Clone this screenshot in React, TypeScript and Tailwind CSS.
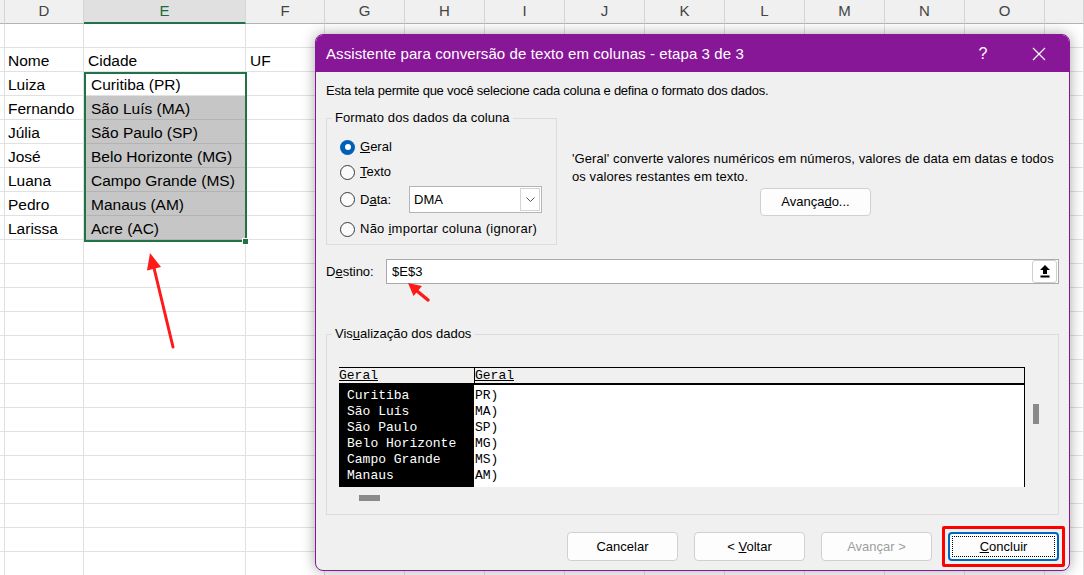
import React from "react";

const COLS = ["", "D", "E", "F", "G", "H", "I", "J", "K", "L", "M", "N", "O", ""];

const people: [string, string][] = [
  ["Luiza", "Curitiba (PR)"],
  ["Fernando", "São Luís (MA)"],
  ["Júlia", "São Paulo (SP)"],
  ["José", "Belo Horizonte (MG)"],
  ["Luana", "Campo Grande (MS)"],
  ["Pedro", "Manaus (AM)"],
  ["Larissa", "Acre (AC)"],
];

const preview: [string, string][] = [
  ["Curitiba", "PR)"],
  ["São Luís", "MA)"],
  ["São Paulo", "SP)"],
  ["Belo Horizonte", "MG)"],
  ["Campo Grande", "MS)"],
  ["Manaus", "AM)"],
];

function cellText(r: number, c: number): string {
  if (r === 1) {
    if (c === 1) return "Nome";
    if (c === 2) return "Cidade";
    if (c === 3) return "UF";
    return "";
  }
  if (r >= 2 && r <= 8) {
    const p = people[r - 2];
    if (c === 1) return p[0];
    if (c === 2) return p[1];
  }
  return "";
}

function Sheet() {
  const rows = Array.from({ length: 23 }, (_, i) => i);
  return (
    <div className="grid grid-cols-[5px_79px_162px_79px_repeat(9,80px)_39px] font-['Liberation_Sans',Arial,sans-serif]">
      {COLS.map((c, i) => (
        <div
          key={"h" + i}
          className={`flex h-6 items-center justify-center overflow-hidden border-r border-r-[#d6d6d6] text-[15px] ${
            i === 2
              ? "border-b-2 border-b-[#217346] bg-[#e0e0e0] text-[#1b6b3f]"
              : "border-b border-b-[#b4b4b4] bg-[#f0f0f0] text-[#444]"
          }`}
        >
          {c}
        </div>
      ))}
      {rows.map((r) =>
        COLS.map((_, c) => {
          const sel = c === 2 && r >= 3 && r <= 8;
          const pad = c === 1 ? "pl-[3px]" : c === 2 ? (r >= 2 ? "pl-[7px]" : "pl-[4px]") : "pl-[4px]";
          return (
            <div
              key={r + "-" + c}
              className={`flex h-6 items-center overflow-visible whitespace-nowrap border-b border-r pt-[2px] text-[15.5px] text-black ${pad} ${
                sel ? "border-[#b3b3b3] bg-[#c6c6c6]" : "border-[#e1e1e1] bg-white"
              }`}
            >
              {cellText(r, c)}
            </div>
          );
        }),
      )}
    </div>
  );
}

function Radio({ checked }: { checked?: boolean }) {
  return checked ? (
    <span className="flex h-[15px] w-[15px] shrink-0 items-center justify-center rounded-full bg-[#005fb8]">
      <span className="h-[6px] w-[6px] rounded-full bg-white" />
    </span>
  ) : (
    <span className="h-[15px] w-[15px] shrink-0 rounded-full border border-[#3a3a3a] bg-[#fbfbfb]" />
  );
}

function Btn({ children, disabled }: { children: React.ReactNode; disabled?: boolean }) {
  return (
    <button
      className={`h-[29px] w-[111px] rounded-[4px] border border-[#d0d0d0] bg-[#fdfdfd] text-[13px] ${
        disabled ? "text-[#9d9d9d]" : "text-black"
      }`}
    >
      {children}
    </button>
  );
}

function Dialog() {
  return (
    <div className="absolute left-[315px] top-[34px] w-[755px] overflow-hidden rounded-[8px] border border-[#881798] bg-[#f0f0f0] font-['Liberation_Sans',Arial,sans-serif] text-[13px] text-black shadow-[0_0_14px_rgba(0,0,0,0.35)]">
      <div className="flex h-[37px] items-center bg-[#881798] pl-[10px] pt-[1px] text-white">
        <span className="text-[15px] tracking-[0.1px]">Assistente para conversão de texto em colunas - etapa 3 de 3</span>
        <span className="ml-auto w-[30px] text-center text-[16px] font-light">?</span>
        <span className="ml-[18px] mr-[7px] flex w-[46px] items-center justify-center">
          <svg width="14" height="14" viewBox="0 0 14 14">
            <path d="M1 1L13 13M13 1L1 13" stroke="white" strokeWidth="1.2" />
          </svg>
        </span>
      </div>

      <div className="px-[10px] pb-[9px] pt-[11px]">
        <div className="leading-4 tracking-[-0.25px]">
          Esta tela permite que você selecione cada coluna e defina o formato dos dados.
        </div>

        <div className="mt-[11px] flex">
          <fieldset className="h-[135px] w-[231px] shrink-0 border border-[#dcdcdc]">
            <legend className="ml-[5px] px-[3px] leading-4 tracking-[0.1px]">Formato dos dados da coluna</legend>
            <div className="pl-[13px]">
              <div className="mt-[11px] flex h-[20px] items-center gap-[5px]">
                <Radio checked />
                <span>
                  <u>G</u>eral
                </span>
              </div>
              <div className="mt-[5px] flex h-[20px] items-center gap-[5px]">
                <Radio />
                <span>
                  <u>T</u>exto
                </span>
              </div>
              <div className="mt-[4px] flex h-[27px] items-center gap-[5px]">
                <Radio />
                <span className="w-[44px]">
                  D<u>a</u>ta:
                </span>
                <div className="flex h-[27px] w-[133px] items-stretch border border-[#b4b4b4] bg-white">
                  <span className="flex flex-1 items-center pl-[4px]">DMA</span>
                  <span className="my-[1px] mr-[1px] flex w-[20px] items-center justify-center border border-[#d4d4d4]">
                    <svg width="9" height="5" viewBox="0 0 9 5">
                      <path d="M0.5 0.5L4.5 4.5L8.5 0.5" fill="none" stroke="#555" strokeWidth="1" />
                    </svg>
                  </span>
                </div>
              </div>
              <div className="mt-[6px] flex h-[20px] items-center gap-[5px]">
                <Radio />
                <span className="tracking-[0.25px]">
                  Não <u>i</u>mportar coluna (ignorar)
                </span>
              </div>
            </div>
          </fieldset>

          <div className="ml-[15px] flex flex-1 flex-col items-center pt-[40px]">
            <div className="w-full leading-[18px] tracking-[0.09px]">
              'Geral' converte valores numéricos em números, valores de data em datas e todos
              <br />
              os valores restantes em texto.
            </div>
            <button className="mt-[2px] h-[28px] w-[111px] rounded-[4px] border border-[#d0d0d0] bg-[#fdfdfd] text-[13px]">
              Avança<u>d</u>o...
            </button>
          </div>
        </div>

        <div className="mt-[14px] flex items-center">
          <span className="w-[60px]">
            D<u>e</u>stino:
          </span>
          <div className="flex h-[25px] flex-1 items-center border border-[#a9a9a9] bg-white">
            <span className="pl-[5px]">$E$3</span>
            <span className="ml-auto mr-[1px] flex h-[23px] w-[25px] items-center justify-center rounded-[3px] border border-[#cfcfcf] bg-white">
              <svg width="10" height="13" viewBox="0 0 10 13">
                <path d="M5 0L10 5H7V9H3V5H0Z" fill="black" />
                <rect x="0.5" y="10.5" width="9" height="2" fill="black" />
              </svg>
            </span>
          </div>
        </div>

        <fieldset className="mt-[42px] h-[189px] border border-[#dcdcdc]">
          <legend className="ml-[5px] px-[3px] leading-4">
            Vis<u>u</u>alização dos dados
          </legend>
          <div className="mt-[25px] flex items-start pl-[12px]">
            <div className="flex h-[120px] w-[686px] flex-col overflow-hidden border-r border-t border-black font-['Liberation_Mono','Courier_New',monospace] text-[13px] leading-4">
              <div className="flex h-[15px] bg-[#f0f0f0] leading-[16px]">
                <span className="w-[136px] border-r border-black underline">Geral</span>
                <span className="underline">Geral</span>
              </div>
              <div className="h-[2px] bg-black" />
              <div className="flex flex-1">
                <div className="w-[135px] bg-black pl-[8px] pt-[3px] text-white">
                  {preview.map(([a]) => (
                    <div key={a} className="h-4 whitespace-pre">
                      {a}
                    </div>
                  ))}
                </div>
                <div className="flex-1 bg-white pl-[1px] pt-[3px]">
                  {preview.map(([a, b]) => (
                    <div key={a} className="h-4">
                      {b}
                    </div>
                  ))}
                </div>
              </div>
            </div>
            <div className="ml-[8px] mt-[37px] h-[20px] w-[6px] bg-[#8a8a8a]" />
          </div>
          <div className="ml-[32px] mt-[8px] h-[6px] w-[21px] bg-[#8a8a8a]" />
        </fieldset>

        <div className="mt-[17px] flex justify-end gap-[16px]">
          <Btn>Cancelar</Btn>
          <Btn>
            &lt; <u>V</u>oltar
          </Btn>
          <Btn disabled>Avançar &gt;</Btn>
          <div className="relative">
            <button className="relative h-[29px] w-[111px] rounded-[4px] border-2 border-[#0067c0] bg-[#fdfdfd] text-[13px]">
              <span className="absolute inset-[2px] border border-dotted border-black" />
              <u>C</u>oncluir
            </button>
            <div className="pointer-events-none absolute -inset-[6px] rounded-[2px] border-[3px] border-[#ff0000]" />
          </div>
        </div>
      </div>
    </div>
  );
}

export default function App() {
  return (
    <div className="relative h-[575px] w-[1084px] overflow-hidden bg-white">
      <Sheet />
      <div className="absolute left-[84px] top-[72px] h-[170px] w-[163px] border-2 border-[#217346]" />
      <div className="absolute left-[242px] top-[238px] h-[7px] w-[7px] border border-white bg-[#217346]" />
      <Dialog />
      <svg className="pointer-events-none absolute left-0 top-0" width="1084" height="575">
        <line x1="173" y1="347" x2="154" y2="268" stroke="#ff1a1a" strokeWidth="3" strokeLinecap="round" />
        <polygon points="150,253 161,267 147,270.5" fill="#ff1a1a" />
        <line x1="428" y1="300" x2="417" y2="291" stroke="#ff1a1a" strokeWidth="3.5" strokeLinecap="round" />
        <polygon points="408,283 422,286 413.5,296" fill="#ff1a1a" />
      </svg>
    </div>
  );
}
